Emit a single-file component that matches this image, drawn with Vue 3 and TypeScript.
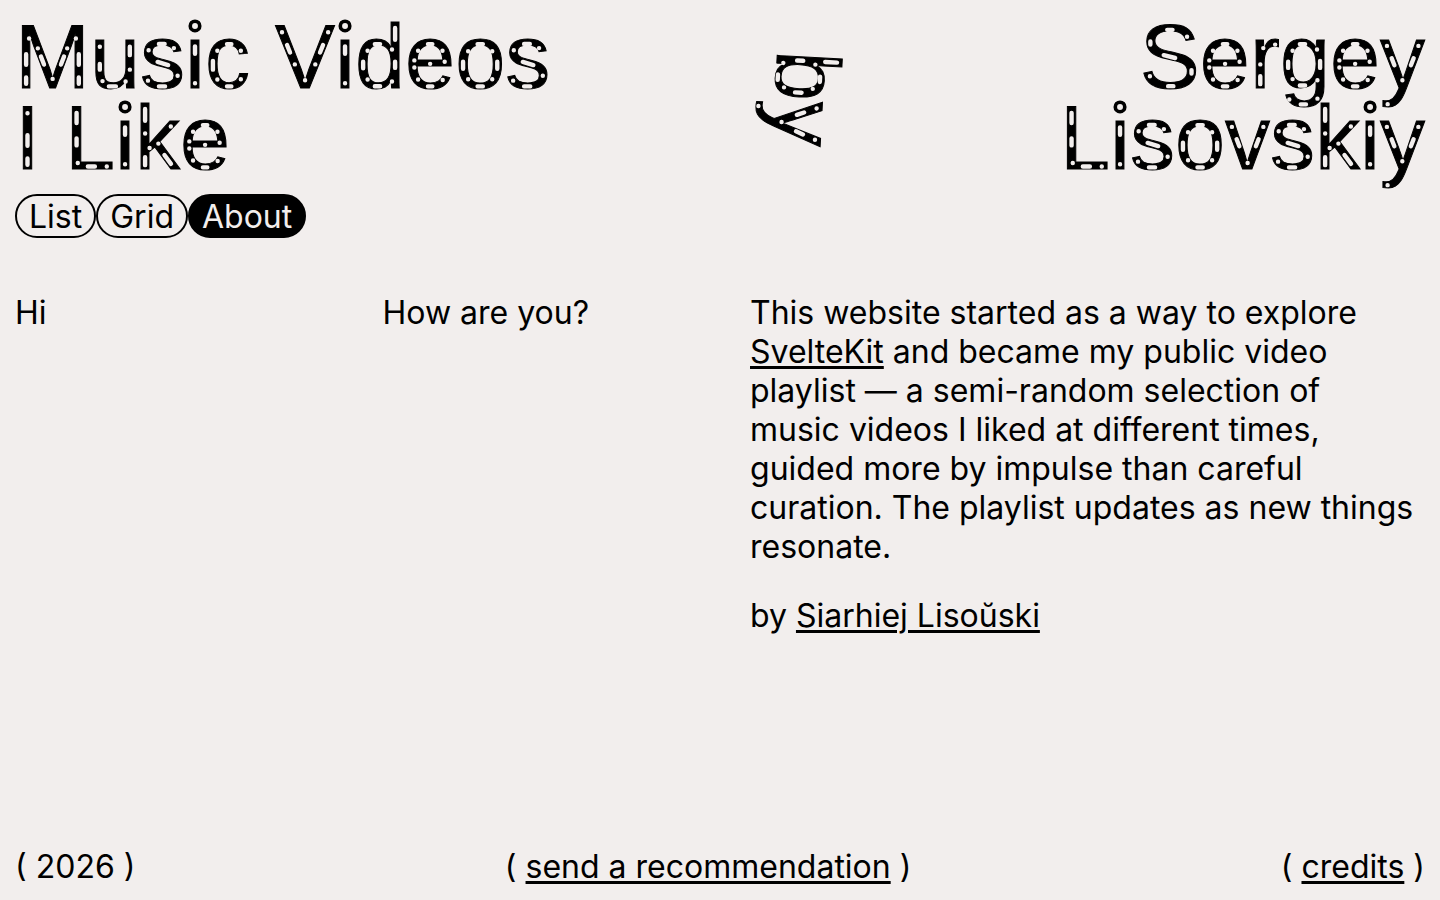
<script setup lang="ts">
import { defineComponent, h } from 'vue'

interface Glyph {
  advance: number
  marks: string
}

/* Perforations along the strokes of each letter, in font units above the baseline. */
const bowl = 'M450 1022H570M450 62H570M285 870h1M285 215h1M184 620V470'
const arms = 'M154 980h1M262 700L324 540M870 980h1M762 700L700 540'
const glyphs: Record<string, Glyph> = {
  ' ': { advance: 569, marks: '' },
  M: { advance: 1706, marks: 'M253 790V550M253 263V120M1452 790V550M1452 263V120M320 1150h1M1385 1150h1M519 925h1M1187 925h1M590 740L660 555M1116 740L1046 555M856 230h1' },
  V: { advance: 1366, marks: 'M158 1290h1M273 1000L342 830M450 560h1M1208 1290h1M1093 1000L1024 830M916 560h1M683 200h1' },
  I: { advance: 569, marks: 'M284 1290h1M284 790V550M284 263V120' },
  L: { advance: 1139, marks: 'M263 1300V1070M263 720V560M290 160h1M520 78H680M950 78h1' },
  S: { advance: 1366, marks: 'M620 1346H740M1070 1190h1M236 1080V1010M540 770L800 705M1172 430V350M640 64H760M225 290h1' },
  b: { advance: 1139, marks: 'M569 1022H689M569 62H689M854 870h1M854 215h1M955 620V470M228 1390V1120M299 900h1M228 620V480M299 170h1' },
  c: { advance: 1024, marks: 'M180 640V440M500 1022H600M500 60H600M280 870h1M280 215h1M815 870h1M815 220h1' },
  d: { advance: 1139, marks: bowl + 'M911 1390V1120M840 900h1M911 620V480M840 170h1' },
  e: { advance: 1139, marks: 'M520 1022H620M520 60H620M295 870h1M850 870h1M295 215h1M855 205h1M210 650h1M210 490h1M900 620h1M569 572h1' },
  g: { advance: 1139, marks: 'M450 1022H570M450 78H570M285 870h1M285 225h1M184 620V480M840 900h1M911 640V480M850 200h1M210 -240h1M470 -350H590M850 -220h1' },
  i: { advance: 455, marks: 'M227 970V800M227 130h1' },
  k: { advance: 1024, marks: 'M228 1390V1120M228 830h1M228 290V110M330 500h1M530 600h1M813 990h1M668 340L817 140' },
  o: { advance: 1139, marks: 'M510 1022H630M510 60H630M180 620V460M958 620V460M295 860h1M843 860h1M295 220h1M843 220h1' },
  r: { advance: 682, marks: 'M300 930h1M570 1010h1M232 560h1M232 290V110' },
  s: { advance: 1024, marks: 'M195 880h1M430 1026H560M770 930h1M400 615L640 545M855 300h1M430 60H570M180 190h1' },
  u: { advance: 1139, marks: 'M224 960h1M224 570V440M285 180h1M430 60H590M810 170h1M907 440h1M907 960V770' },
  v: { advance: 1024, marks: arms + 'M512 160h1' },
  y: { advance: 1024, marks: arms + 'M505 200h1M170 -345h1' },
}

const BASELINE = 1638
const LINE = 1843

/* One line of display text with the perforations laid over it. */
const Perforated = defineComponent({
  props: { text: { type: String, required: true } },
  setup(props) {
    return () => {
      let x = 0
      const parts = [...props.text].map((letter) => {
        const glyph = glyphs[letter]
        const nodes = [h('path', { class: 'marks', d: glyph.marks })]
        if (letter === 'i') {
          nodes.push(h('rect', { class: 'clear', x: 95, y: 1270, width: 265, height: 250 }))
          nodes.push(h('circle', { class: 'ring', cx: 227, cy: 1434, r: 108 }))
        }
        const group = h('g', { transform: `translate(${x} ${BASELINE}) scale(1 -1)` }, nodes)
        x += glyph.advance
        return group
      })
      return h('span', { class: 'line' }, [
        props.text,
        h('svg', { viewBox: `0 0 ${x} ${LINE}`, 'aria-hidden': 'true' }, parts),
      ])
    }
  },
})

const views = ['List', 'Grid', 'About']
const current = 'About'
</script>

<template>
  <div class="page">
    <header class="header columns">
      <h1 class="display title">
        <Perforated text="Music Videos" />
        <Perforated text="I Like" />
      </h1>
      <div class="author">
        <p class="display by"><Perforated text="by" /></p>
        <p class="display name">
          <Perforated text="Sergey" />
          <Perforated text="Lisovskiy" />
        </p>
      </div>
    </header>

    <nav class="views" aria-label="Views">
      <a
        v-for="view in views"
        :key="view"
        href="#"
        class="view"
        :class="{ active: view === current }"
        :aria-current="view === current ? 'page' : undefined"
      >{{ view }}</a>
    </nav>

    <main class="about columns">
      <p>Hi</p>
      <p>How are you?</p>
      <div class="story">
        <p>
          This website started as a way to explore <a href="#">SvelteKit</a> and became my public
          video playlist — a semi-random selection of music videos I liked at different times,
          guided more by impulse than careful curation. The playlist updates as new things resonate.
        </p>
        <p>by <a href="#">Siarhiej Lisoŭski</a></p>
      </div>
    </main>

    <footer class="footer">
      <span>( 2026 )</span>
      <span>( <a href="#">send a recommendation</a> )</span>
      <span>( <a href="#">credits</a> )</span>
    </footer>
  </div>
</template>

<style>
body {
  background: #f2eeed;
}

.display .line {
  display: block;
  position: relative;
  width: fit-content;
  white-space: nowrap;
}

.display .line svg {
  position: absolute;
  inset: 0;
  width: 100%;
  height: 100%;
  overflow: visible;
}

.display .marks {
  fill: none;
  stroke: #f2eeed;
  stroke-width: 100;
  stroke-linecap: round;
}

.display .clear {
  fill: #f2eeed;
}

.display .ring {
  fill: #f2eeed;
  stroke: #000;
  stroke-width: 82;
}
</style>

<style scoped>
.page {
  display: flex;
  flex-direction: column;
  box-sizing: border-box;
  min-height: 100vh;
  padding: 17px 15px 14px;
  background: #f2eeed;
  color: #000;
  font-family: Inter, "Liberation Sans", sans-serif;
  font-size: 32px;
  line-height: 39px;
}

p,
h1 {
  margin: 0;
}

a {
  color: inherit;
  text-decoration-thickness: 3px;
  text-underline-offset: 3px;
}

.columns {
  display: grid;
  grid-template-columns: repeat(4, minmax(0, 1fr));
  column-gap: 60px;
}

.display {
  font-family: "Liberation Sans", Arial, sans-serif;
  font-size: 90px;
  font-weight: 400;
  font-kerning: none;
  line-height: 81px;
  -webkit-text-stroke: 1px #000;
}

.title {
  grid-column: span 2;
}

.author {
  grid-column: span 2;
  display: flex;
  justify-content: space-between;
  align-items: center;
}

.by {
  margin-left: 8px;
  transform: rotate(93deg);
}

.name {
  display: flex;
  flex-direction: column;
  align-items: flex-end;
}

.views {
  display: flex;
  margin-top: 15px;
}

.view {
  box-sizing: border-box;
  height: 44px;
  padding: 1px 12px 0;
  border: 2px solid #000;
  border-radius: 22px;
  line-height: 40px;
  text-decoration: none;
}

.active {
  background: #000;
  color: #f2eeed;
}

.about {
  margin-top: 55px;
}

.story {
  grid-column: span 2;
  display: grid;
  row-gap: 30px;
  padding-right: 10px;
}

.footer {
  display: flex;
  justify-content: space-between;
  margin-top: auto;
}
</style>
